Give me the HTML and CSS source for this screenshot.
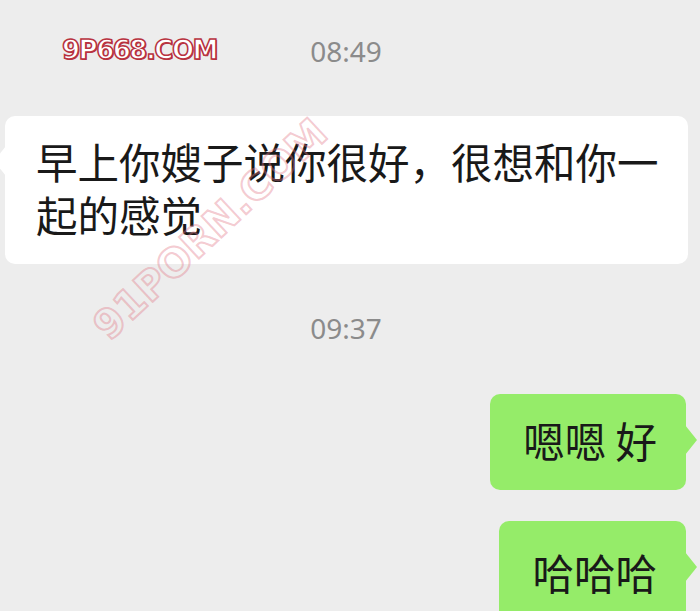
FILE: index.html
```html
<!DOCTYPE html>
<html lang="zh-CN">
<head>
<meta charset="utf-8">
<title>Chat</title>
<link rel="stylesheet" href="styles.css">
</head>
<body>
<div class="chat">
  <div class="time time-first">08:49</div>
  <div class="row row-left">
    <div class="bubble bubble-white">早上你嫂子说你很好，很想和你一起的感觉</div>
  </div>
  <div class="time time-second">09:37</div>
  <div class="row row-right">
    <div class="bubble bubble-green">嗯嗯 好</div>
  </div>
  <div class="row row-right row-gap">
    <div class="bubble bubble-green bubble-last">哈哈哈</div>
  </div>
  <div class="mark mark-top">9P668.COM</div>
  <div class="mark mark-diag">91PORN.COM</div>
</div>
</body>
</html>
```

FILE: styles.css
```css
html, body {
  margin: 0;
  padding: 0;
  background: #ededed;
}
.chat {
  position: relative;
  width: 700px;
  height: 611px;
  overflow: hidden;
  display: flex;
  flex-direction: column;
  padding-top: 31px;
  box-sizing: border-box;
  font-family: "Noto Sans CJK SC", "Noto Sans", sans-serif;
}
.time {
  height: 40px;
  line-height: 40px;
  text-align: center;
  font-family: "Noto Sans", "Noto Sans CJK SC", sans-serif;
  font-size: 28px;
  color: #8b8b8b;
  padding-right: 8px;
}
.time-second {
  margin-top: 44px;
}
.row {
  display: flex;
}
.row-left {
  margin-top: 45px;
  padding-left: 5px;
  padding-right: 12px;
}
.row-right {
  justify-content: flex-end;
  padding-right: 14px;
  margin-top: 46px;
}
.row-gap {
  margin-top: 31px;
}
.bubble {
  position: relative;
  border-radius: 10px;
  font-size: 41.5px;
  line-height: 53px;
  color: #191919;
  padding: 19px 28px 23px 31px;
}
.bubble-white {
  background: #ffffff;
  flex: 1;
  padding-right: 27px;
}
.bubble-white::before {
  content: "";
  position: absolute;
  left: -11px;
  top: 30px;
  border-top: 15px solid transparent;
  border-bottom: 15px solid transparent;
  border-right: 12px solid #ffffff;
}
.bubble-green {
  background: #95ec69;
  padding: 20px 29px 23px 33px;
}
.bubble-green::after {
  content: "";
  position: absolute;
  right: -11px;
  top: 31px;
  border-top: 15px solid transparent;
  border-bottom: 15px solid transparent;
  border-left: 12px solid #95ec69;
}
.bubble-last {
  padding-top: 25px;
  padding-bottom: 30px;
}
.mark {
  position: absolute;
  font-family: "DejaVu Sans", sans-serif;
  font-weight: bold;
  pointer-events: none;
}
.mark-top {
  left: 62px;
  top: 35px;
  font-size: 26px;
  letter-spacing: -1.5px;
  color: #ffffff;
  -webkit-text-stroke: 1.5px #b8323f;
  text-shadow: 1px 1px 0 #b8323f;
}
.mark-diag {
  left: 30px;
  top: 206px;
  font-size: 40px;
  color: rgba(255, 255, 255, 0);
  -webkit-text-stroke: 2px rgba(226, 120, 135, 0.4);
  transform: rotate(-43deg);
  transform-origin: center;
  width: 360px;
  text-align: center;
}
```
